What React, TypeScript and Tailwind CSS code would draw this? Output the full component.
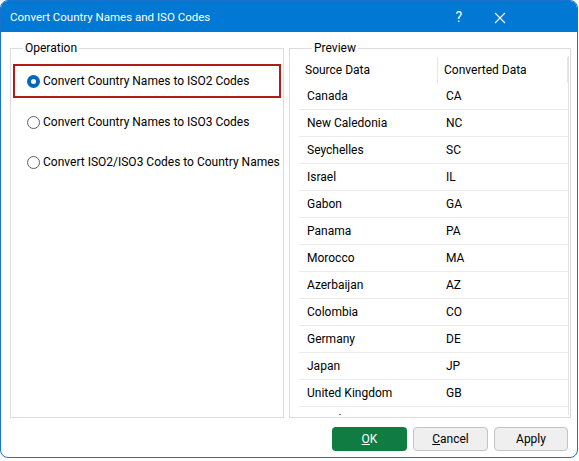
const rows: [string, string][] = [
  ["Canada", "CA"],
  ["New Caledonia", "NC"],
  ["Seychelles", "SC"],
  ["Israel", "IL"],
  ["Gabon", "GA"],
  ["Panama", "PA"],
  ["Morocco", "MA"],
  ["Azerbaijan", "AZ"],
  ["Colombia", "CO"],
  ["Germany", "DE"],
  ["Japan", "JP"],
  ["United Kingdom", "GB"],
  ["United States", "US"],
];

const ops = [
  "Convert Country Names to ISO2 Codes",
  "Convert Country Names to ISO3 Codes",
  "Convert ISO2/ISO3 Codes to Country Names",
];

function Radio({ checked }: { checked: boolean }) {
  return checked ? (
    <span className="flex h-[13px] w-[13px] shrink-0 items-center justify-center rounded-full bg-[#0067c0]">
      <span className="h-[5px] w-[5px] rounded-full bg-white" />
    </span>
  ) : (
    <span className="h-[13px] w-[13px] shrink-0 rounded-full border border-[#5f5f5f] bg-white" />
  );
}

export default function App() {
  return (
    <div
      className="h-[461px] w-[579px] bg-white text-[12px] text-black"
      style={{ fontFamily: 'Roboto, "Noto Sans", sans-serif' }}
    >
      <div className="flex h-[458px] w-[578px] flex-col overflow-hidden rounded-[8px] border border-[#1a73c9] bg-white">
        {/* title bar */}
        <div className="flex h-[31px] shrink-0 items-center bg-[#0078d4] pl-[9px] pt-[2px] text-white">
          <span className="flex-1 whitespace-nowrap text-[11.5px]">Convert Country Names and ISO Codes</span>
          <span className="mr-[32px] text-[14px]">?</span>
          <svg width="12" height="12" viewBox="0 0 12 12" className="mr-[71px]">
            <path d="M1 1L11 11M11 1L1 11" stroke="white" strokeWidth="1.1" />
          </svg>
        </div>

        <div className="flex gap-[5px] pl-[9px] pt-[8px]">
          {/* Operation */}
          <fieldset className="h-[378px] w-[274px] shrink-0 border border-[#dcdcdc] px-[2px] pt-[8px]">
            <legend className="ml-[10px] px-[2px] leading-[16px]">Operation</legend>
            <div className="flex h-[34px] items-center gap-[3px] border-2 border-[#b11b1b] pl-[12px]">
              <Radio checked />
              <span className="whitespace-nowrap">{ops[0]}</span>
            </div>
            <div className="mt-[12px] flex h-[24px] items-center gap-[3px] pl-[14px]">
              <Radio checked={false} />
              <span className="whitespace-nowrap">{ops[1]}</span>
            </div>
            <div className="mt-[16px] flex h-[24px] items-center gap-[3px] pl-[14px]">
              <Radio checked={false} />
              <span className="whitespace-nowrap">{ops[2]}</span>
            </div>
          </fieldset>

          {/* Preview */}
          <fieldset className="h-[378px] w-[282px] shrink-0 border border-[#dcdcdc] pl-[9px] pr-[1px]">
            <legend className="ml-[13px] px-[2px] leading-[16px]">Preview</legend>
            <div className="h-[359px] overflow-hidden border-r border-[#e3e3e3] pt-[1px]">
              <div className="flex h-[26px] items-center">
                <span className="w-[138px] whitespace-nowrap pl-[6px]">Source Data</span>
                <span className="h-full flex-1 whitespace-nowrap border-x border-[#e5e5e5] pl-[6px] leading-[26px]">
                  Converted Data
                </span>
              </div>
              {rows.map(([a, b]) => (
                <div key={a} className="flex h-[27px] items-center border-b border-[#ececec]">
                  <span className="w-[139px] whitespace-nowrap pl-[8px]">{a}</span>
                  <span className="pl-[8px]">{b}</span>
                </div>
              ))}
            </div>
          </fieldset>
        </div>

        {/* buttons */}
        <div className="mt-[9px] flex justify-end gap-[6px] pr-[9px]">
          <button className="h-[24px] w-[75px] rounded-[4px] bg-[#107c41] text-white">
            <span className="underline">O</span>K
          </button>
          <button className="h-[24px] w-[75px] rounded-[4px] border border-[#c4c4c4] bg-[#efefef]">
            <span className="underline">C</span>ancel
          </button>
          <button className="h-[24px] w-[74px] rounded-[4px] border border-[#c4c4c4] bg-[#efefef]">
            Apply
          </button>
        </div>
      </div>
    </div>
  );
}
